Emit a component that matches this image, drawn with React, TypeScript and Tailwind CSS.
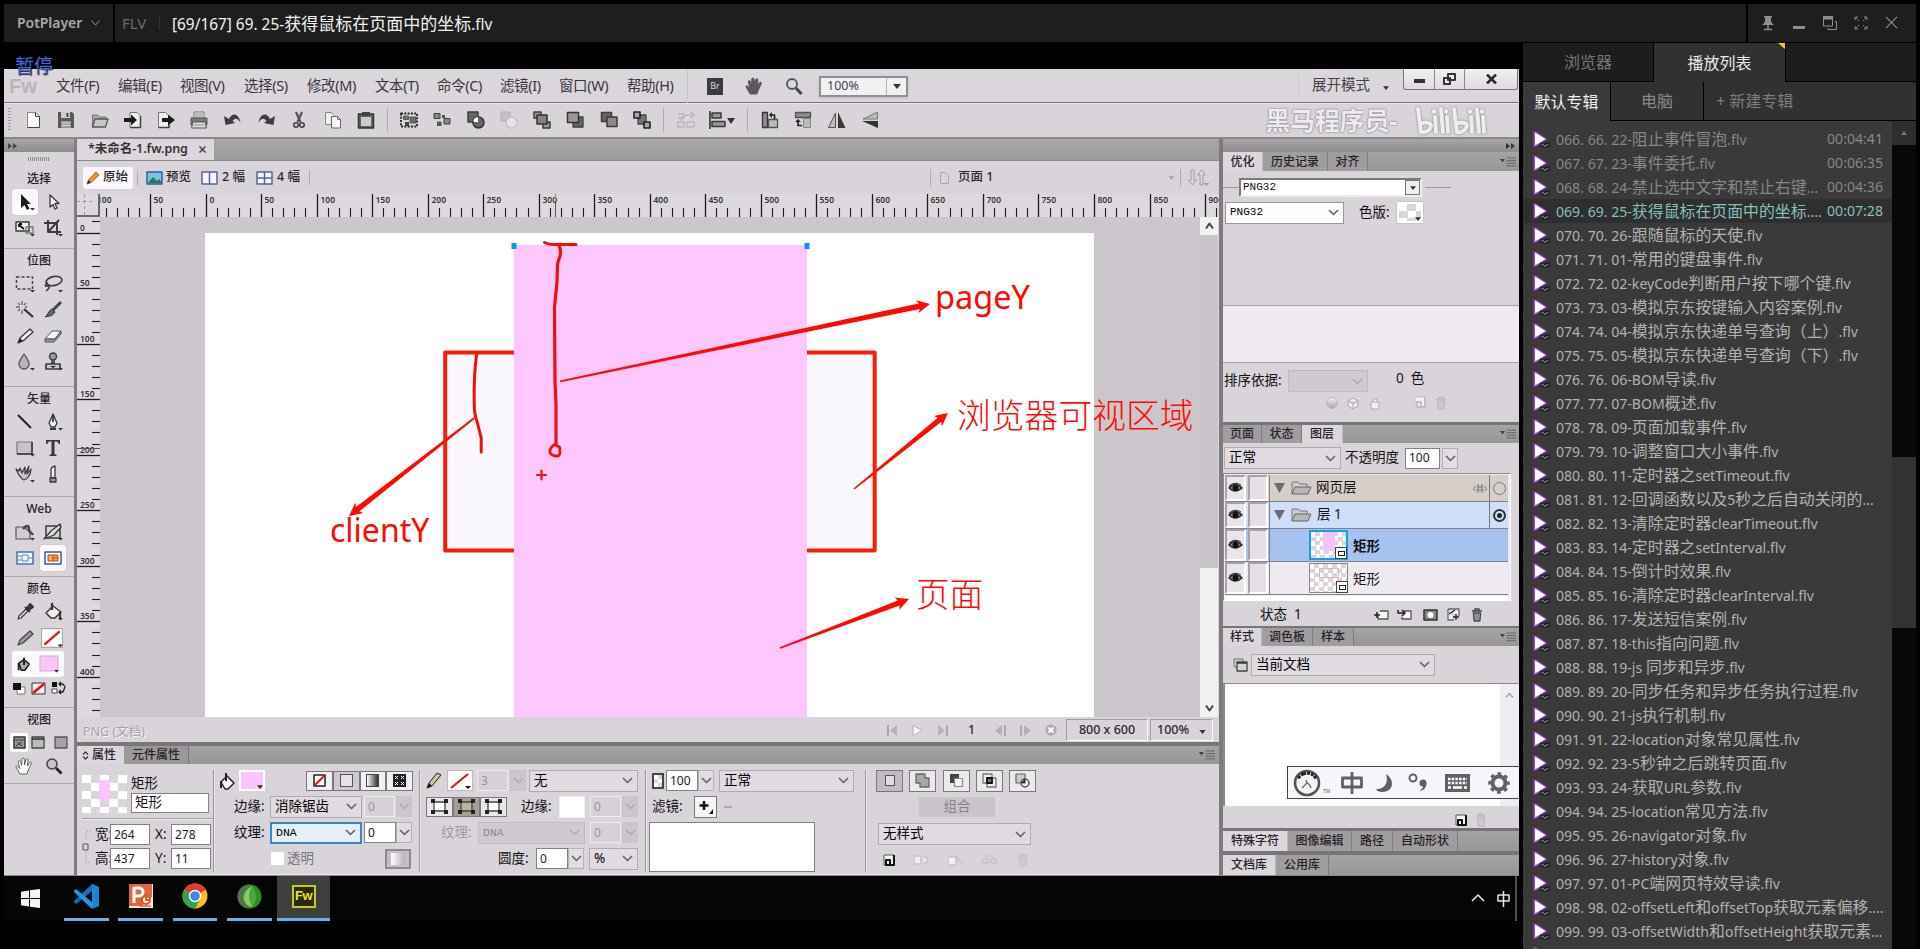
import React from 'react';

type Kids = { children?: React.ReactNode };

/* ---------- shared pieces ---------- */

function Ico({ children, c = 'w-[18px] h-[18px]', vb = '0 0 18 18' }: Kids & { c?: string; vb?: string }) {
  return (
    <svg viewBox={vb} className={`${c} block shrink-0`} fill="none" strokeLinejoin="round">
      {children}
    </svg>
  );
}

const Chev = ({ c = 'text-[#666]' }: { c?: string }) => (
  <Ico c={`w-[11px] h-[7px] ${c}`} vb="0 0 11 7">
    <path d="M1 1l4.5 4.5L10 1" stroke="currentColor" strokeWidth="1.7" />
  </Ico>
);

const Down = ({ c = 'w-[8px] h-[5px]' }: { c?: string }) => (
  <Ico c={c} vb="0 0 8 5">
    <path d="M0 0h8L4 5z" fill="#333" />
  </Ico>
);

function Combo({ text, c, dim }: { text: string; c: string; dim?: boolean }) {
  return (
    <div
      className={`flex shrink-0 items-center justify-between border pl-[4px] pr-[4px] ${c} ${
        dim ? 'border-[#c0bcc0] bg-[#cfcacf] text-[#8d8a8e]' : 'text-black'
      }`}
    >
      <span className="whitespace-nowrap">{text}</span>
      <Chev c={dim ? 'text-[#b0acb0]' : 'text-[#666]'} />
    </div>
  );
}

function Num({ v, c, dim, mono }: { v: string; c: string; dim?: boolean; mono?: boolean }) {
  return (
    <div
      className={`flex h-[21px] shrink-0 items-center border pl-[3px] text-[12px] ${c} ${
        dim ? 'border-[#f0edf1] bg-[#d6d1d6] text-[#98949a]' : 'border-[#858085] bg-white text-[#222]'
      } ${mono ? "[font-family:'Liberation_Mono',monospace]" : ''}`}
    >
      {v}
    </div>
  );
}

const Arr = ({ dim, c = '' }: { dim?: boolean; c?: string }) => (
  <div
    className={`flex h-[21px] w-[16px] shrink-0 items-center justify-center border ${c} ${
      dim ? 'border-[#cac5ca] bg-[#cbc6cb]' : 'border-[#b5b0b5] bg-[#e2dde3]'
    }`}
  >
    <Chev c={dim ? 'text-[#b0acb0]' : 'text-[#666]'} />
  </div>
);

const Trash = ({ f }: { f: string }) => (
  <Ico c="w-[12px] h-[14px]" vb="0 0 12 14">
    <path d="M1 3h10M4 3V1h4v2M2.500 5h7l-.7 8H3.200z" stroke={f} strokeWidth="1.500" />
    <path d="M5 6v6M7 6v6" stroke={f} />
  </Ico>
);

const NewDoc = ({ f, k }: { f: string; k: string }) => (
  <Ico c="w-[12px] h-[12px]" vb="0 0 12 12">
    <path d="M1 1h10v10H1z" stroke={f} fill="#f4f1f5" />
    <path d="M11 1v10H3V6h4v5" stroke={k} strokeWidth="2" />
  </Ico>
);

const MenuGlyph = () => (
  <Ico c="w-[16px] h-[10px]" vb="0 0 16 10">
    <path d="M0 2h5L2.500 5.500z" fill="#444" />
    <path d="M6.500 1H16M6.500 3.600H16M6.500 6.200H16M6.500 8.800H16" stroke="#666" />
  </Ico>
);

function PanelTabs({ tabs, active, h = 'h-[18px]', menu = true }: { tabs: [string, string][]; active: number; h?: string; menu?: boolean }) {
  return (
    <div className={`flex ${h} w-full shrink-0 items-stretch bg-linear-to-b from-[#a6a3a5] to-[#999698] text-[12px] font-medium text-[#262326]`}>
      {tabs.map(([t, w], i) => (
        <div
          key={t}
          className={`flex shrink-0 items-center justify-center whitespace-nowrap border-r ${w} ${
            i === active ? 'border-[#bbb] bg-[#dcd7dd]' : 'border-[#7f7c7e] bg-[#a09d9f]'
          }`}
        >
          {t}
        </div>
      ))}
      {menu && (
        <div className="ml-auto flex items-center pr-[3px]">
          <MenuGlyph />
        </div>
      )}
    </div>
  );
}

/* ---------- player chrome ---------- */

function TitleBar() {
  return (
    <header className="mx-[4px] mt-[4px] flex h-[38px] w-[1912px] shrink-0 items-center bg-[#1e1e1e]">
      <div className="flex h-full w-[111px] items-center border-r-2 border-black pl-[13px] pb-[2px]">
        <span className="text-[14px] font-semibold tracking-[-0.05px] text-[#a9a9a9]">PotPlayer</span>
        <Ico c="ml-[9px] mt-[2px] w-[9px] h-[6px]" vb="0 0 9 6">
          <path d="M.5.5l4 4.500 4-4.500" stroke="#999" />
        </Ico>
      </div>
      <span className="ml-[7px] w-[37px] text-[15px] text-[#6b6b6b]">FLV</span>
      <div className="h-[13px] w-px bg-[#333]" />
      <span className="ml-[12px] mt-[2px] whitespace-nowrap text-[#f2f2f2]">
        <span className="text-[15.4px]">[69/167] 69. 25-</span>
        <span className="text-[17px]">获得鼠标在页面中的坐标</span>
        <span className="text-[15.4px]">.flv</span>
      </span>
      <div className="ml-auto flex h-full w-[170px] items-center border-l-2 border-black pl-[13px] pb-[1px] text-[#8f8f8f]">
        <Ico c="w-[14px] h-[16px]" vb="0 0 14 16">
          <path d="M3 1h8v1.500h-1V7l3 3H1l3-3V2.500H3z" fill="currentColor" />
          <path d="M7 10v4M3 14.500h8" stroke="currentColor" strokeWidth="1.500" />
        </Ico>
        <div className="ml-[18px] mt-[9px] h-[3px] w-[12px] bg-[#8f8f8f]" />
        <Ico c="ml-[17px] w-[16px] h-[16px]" vb="0 0 16 16">
          <path d="M1.500 2h9v9h-9z M13 6.500h1.500v8H6V13" stroke="currentColor" />
          <path d="M1 1h10v3.500H1z" fill="currentColor" />
        </Ico>
        <Ico c="ml-[16px] w-[14px] h-[14px]" vb="0 0 14 14">
          <path d="M1 4V1h3M10 1h3v3M13 10v3h-3M4 13H1v-3M1 1l4 4M13 1L9 5M13 13L9 9M1 13l4-4" stroke="currentColor" strokeDasharray="3 .8" />
        </Ico>
        <Ico c="ml-[17px] w-[13px] h-[13px]" vb="0 0 14 14">
          <path d="M1 1l12 12M13 1L1 13" stroke="currentColor" strokeWidth="1.200" />
        </Ico>
      </div>
    </header>
  );
}

const files: [string, string?][] = [
  ['066. 66. 22-阻止事件冒泡.flv', '00:04:41'],
  ['067. 67. 23-事件委托.flv', '00:06:35'],
  ['068. 68. 24-禁止选中文字和禁止右键...', '00:04:36'],
  ['069. 69. 25-获得鼠标在页面中的坐标....', '00:07:28'],
  ['070. 70. 26-跟随鼠标的天使.flv'],
  ['071. 71. 01-常用的键盘事件.flv'],
  ['072. 72. 02-keyCode判断用户按下哪个键.flv'],
  ['073. 73. 03-模拟京东按键输入内容案例.flv'],
  ['074. 74. 04-模拟京东快递单号查询（上）.flv'],
  ['075. 75. 05-模拟京东快递单号查询（下）.flv'],
  ['076. 76. 06-BOM导读.flv'],
  ['077. 77. 07-BOM概述.flv'],
  ['078. 78. 09-页面加载事件.flv'],
  ['079. 79. 10-调整窗口大小事件.flv'],
  ['080. 80. 11-定时器之setTimeout.flv'],
  ['081. 81. 12-回调函数以及5秒之后自动关闭的...'],
  ['082. 82. 13-清除定时器clearTimeout.flv'],
  ['083. 83. 14-定时器之setInterval.flv'],
  ['084. 84. 15-倒计时效果.flv'],
  ['085. 85. 16-清除定时器clearInterval.flv'],
  ['086. 86. 17-发送短信案例.flv'],
  ['087. 87. 18-this指向问题.flv'],
  ['088. 88. 19-js 同步和异步.flv'],
  ['089. 89. 20-同步任务和异步任务执行过程.flv'],
  ['090. 90. 21-js执行机制.flv'],
  ['091. 91. 22-location对象常见属性.flv'],
  ['092. 92. 23-5秒钟之后跳转页面.flv'],
  ['093. 93. 24-获取URL参数.flv'],
  ['094. 94. 25-location常见方法.flv'],
  ['095. 95. 26-navigator对象.flv'],
  ['096. 96. 27-history对象.flv'],
  ['097. 97. 01-PC端网页特效导读.flv'],
  ['098. 98. 02-offsetLeft和offsetTop获取元素偏移....'],
  ['099. 99. 03-offsetWidth和offsetHeight获取元素...'],
  [''],
];

function Mixed({ text }: { text: string }) {
  return (
    <>
      {text.split(/([\u3000-\u9fff\uff00-\uffef]+)/).map((p, i) => (
        <span key={i} className={i % 2 ? 'text-[15.9px]' : 'text-[14.1px]'}>
          {p}
        </span>
      ))}
    </>
  );
}

function Sidebar() {
  return (
    <aside className="mt-px flex h-[906px] w-[393px] shrink-0 flex-col">
      <div className="flex h-[39px] shrink-0 text-[16px]">
        <div className="flex h-[38px] w-[131px] items-center justify-center border-r border-black bg-[#1d1d1d] text-[#777]">浏览器</div>
        <div className="relative flex h-[39px] w-[131px] items-center justify-center bg-[#313131] text-[#e8e8e8]">
          播放列表
          <svg className="absolute right-0 top-0 h-[6px] w-[7px]" viewBox="0 0 7 6">
            <path d="M0 0h7v6z" fill="#f5d400" />
          </svg>
        </div>
        <div className="ml-px h-[38px] flex-1 bg-[#1d1d1d]" />
      </div>
      <div className="flex h-[39px] shrink-0 text-[16px]">
        <div className="flex h-[39px] w-[87px] items-center justify-center bg-[#3a3a3a] text-[#f0f0f0]">默认专辑</div>
        <div className="flex h-[38px] w-[94px] items-center justify-center border-x border-black bg-[#313131] text-[#8a8a8a]">电脑</div>
        <div className="flex h-[38px] flex-1 items-center bg-[#313131] pl-[12px] text-[#7d7d7d]">+ 新建专辑</div>
      </div>
      <div className="flex h-[828px] shrink-0">
        <div className="flex w-[369px] flex-col overflow-hidden bg-[#3a3a3a] pt-[6px]">
          {files.map(([t, d], i) => (
            <div
              key={i}
              className={`flex h-[24px] shrink-0 items-center pl-[10px] pr-[9px] leading-none ${
                i < 3 ? 'text-[#878787]' : i === 3 ? 'bg-[#2f2f2f] text-[#84c0bd]' : 'text-[#b2b2b2]'
              }`}
            >
              <Ico c="w-[17px] h-[17px]" vb="0 0 17 17">
                <path d="M.5.5h2.500L14.500 8 3 15.500H.5z" fill="#a440cc" />
                <path d="M2 1.500L12.500 8 2 14.500z" fill="#fff" />
                <path d="M7 11.500h9.500v5H7z" fill="#222" />
                <path d="M8.500 14.500c1-2 2-1 2.500 0s2 0 4-1" stroke="#bbb" strokeWidth=".9" />
              </Ico>
              <span className="ml-[6px] whitespace-nowrap">
                <Mixed text={t} />
              </span>
              {d && <span className="ml-auto text-[14.100px]">{d}</span>}
            </div>
          ))}
        </div>
        <div className="flex w-[24px] flex-col bg-[#080808]">
          <div className="flex h-[24px] items-center justify-center bg-[#2e2e2e]">
            <Ico c="w-[6px] h-[4px]" vb="0 0 6 4">
              <path d="M3 0l3 4H0z" fill="#777" />
            </Ico>
          </div>
          <div className="mt-[312px] h-[171px] bg-[#333]" />
        </div>
      </div>
    </aside>
  );
}

/* ---------- editor: menu and toolbar ---------- */

const menus: [string, string][] = [
  ['文件(F)', 'w-[62px]'],
  ['编辑(E)', 'w-[62px]'],
  ['视图(V)', 'w-[64px]'],
  ['选择(S)', 'w-[63px]'],
  ['修改(M)', 'w-[68px]'],
  ['文本(T)', 'w-[62px]'],
  ['命令(C)', 'w-[63px]'],
  ['滤镜(I)', 'w-[59px]'],
  ['窗口(W)', 'w-[68px]'],
  ['帮助(H)', 'w-[60px]'],
];

const Hand = ({ f, s }: { f: string; s: string }) => (
  <path d="M5 17L2.500 12.500.8 9.500c.5-1 1.700-.8 2.400.2l1.600 1.800L3.200 4.500c.4-1.400 1.900-1.200 2.300 0l1.300 4L6.700 2c.4-1.300 2.200-1.200 2.500 0l.4 6 1.300-5.500c.6-1.200 2.200-.8 2.100.4l-.6 6.300 2.200-3.600c.9-1 2.100-.2 1.800.9l-3 6.500-1.400 4z" fill={f} stroke={s} strokeWidth=".9" />
);

function MenuBar() {
  return (
    <div className="flex h-[34px] shrink-0 items-start border-b border-[#777378] bg-[#dbd6dc]">
      <div className="flex h-full w-[52px] items-center pl-[5px] pt-[1px] text-[20px] font-bold text-[#b9b4ba] [font-family:'Liberation_Sans',sans-serif]">Fw</div>
      <div className="flex h-[34px] items-center text-[14.500px] text-[#39363b]">
        {menus.map(([t, w]) => (
          <span key={t} className={`${w} whitespace-nowrap tracking-[-0.4px]`}>
            {t}
          </span>
        ))}
      </div>
      <div className="flex h-[34px] items-center border-l border-[#cbc6cc]">
        <div className="ml-[19px] flex h-[17px] w-[16px] items-center justify-center bg-[#3d3a3d] text-[9px] text-[#d8d8d8]">Br</div>
        <Ico c="ml-[22px] w-[18px] h-[18px]">
          <Hand f="#5a575b" s="#5a575b" />
        </Ico>
        <Ico c="ml-[22px] w-[18px] h-[18px]">
          <circle cx="7" cy="7" r="5" stroke="#555" strokeWidth="1.800" />
          <path d="M11 11l5.500 6" stroke="#444" strokeWidth="3" />
        </Ico>
        <div className="ml-[16px] flex h-[21px] w-[89px] items-center border-2 border-[#928e93] bg-[#f3f0f4] pl-[6px] text-[12.500px] text-[#444] shadow-sm">
          <span className="w-[59px]">100%</span>
          <div className="flex h-full flex-1 items-center justify-center border-l border-[#b5b1b5]">
            <Down />
          </div>
        </div>
      </div>
      <div className="ml-auto flex h-[34px] items-start">
        <div className="mt-[5px] flex h-[22px] items-center border-l border-[#cbc6cc] pl-[13px] text-[14.500px] text-[#444]">展开模式</div>
        <div className="ml-[13px] mt-[17px]">
          <Down c="w-[6px] h-[4px]" />
        </div>
        <div className="ml-[14px] mr-[1px] flex h-[21px] w-[115px] rounded-b-[3px] border border-t-0 border-[#77737a] bg-linear-to-b from-[#f2eff3] to-[#dfdae0]">
          <div className="flex w-[31px] items-center justify-center border-r border-[#8b878d]">
            <div className="mt-[4px] h-[4px] w-[11px] bg-[#333]" />
          </div>
          <div className="flex w-[30px] items-center justify-center border-r border-[#8b878d]">
            <Ico c="w-[13px] h-[12px]" vb="0 0 13 12">
              <path d="M5 1h7v6H5z M1 5h6v6H1z" fill="#eee" stroke="#333" strokeWidth="2" />
            </Ico>
          </div>
          <div className="flex flex-1 items-center justify-center">
            <Ico c="w-[11px] h-[10px]" vb="0 0 11 10">
              <path d="M1 .5l9 9M10 .5l-9 9" stroke="#2e2b2f" strokeWidth="2.600" />
            </Ico>
          </div>
        </div>
      </div>
    </div>
  );
}

const d = '#3f3c40';
const g = '#8f8b90';
const pageShape = 'M3.500 1.500h8l4 4v11h-12z';

const fileIcons = [
  <><path d={pageShape} fill="#fbfafb" stroke="#888" /><path d="M11.500 1.500v4h4v11h-12" stroke="#444" /></>,
  <><path d="M1 1h14l2 2v14H1z" fill="#5b585c" /><path d="M4 1h9v6H4z" fill="#ccc" /><path d="M9.500 2h2v4h-2z" fill="#444" /><path d="M4 10h10v7H4z" fill="#999" /><path d="M5 12h8M5 14.500h8" stroke="#ddd" /></>,
  <><path d="M1.500 16V4h5l2 2H15v3" fill="#aaa" stroke="#777" /><path d="M4 8h13l-2.500 8H1.500z" fill="#c9c5ca" stroke="#555" strokeWidth="1.300" /></>,
  <><path d="M6 1.500h7l3.500 3.500v11.500H6z" fill="#eee" stroke="#777" /><path d="M16.500 5v11.500H6" stroke="#444" strokeWidth="1.500" /><path d="M0 7h7V3.500l6 5.500-6 5.500V11H0z" fill="#1d1b1e" /></>,
  <><path d="M1.500 1.500h7L12 5v11.500H1.500z" fill="#eee" stroke="#777" /><path d="M12 14v2.500H1.500" stroke="#444" strokeWidth="1.500" /><path d="M5 7h6V3.500l7 5.500-7 5.500V11H5z" fill="#1d1b1e" /></>,
  <><path d="M4 1h10v6H4z" fill="#eee" stroke="#777" /><path d="M1 7h16v7H1z" fill="#7b787c" stroke="#555" /><path d="M3 11h12l1.500 6h-15z" fill="#ddd" stroke="#555" /><path d="M5 3h8M5 5h8M4 14h10" stroke="#888" /></>,
  <><path d="M5 8C8 1 15 2 16.500 12c-2-4-5-6-8-2l2.500 2-9.500 2L0 5z" fill={d} /></>,
  <><path d="M13 8C10 1 3 2 1.500 12c2-4 5-6 8-2L7 12l9.500 2L18 5z" fill={d} /></>,
  <><path d="M6 1l4.500 10M12 1L7.500 11" stroke="#555" strokeWidth="2.200" /><circle cx="6" cy="14" r="2.200" stroke="#444" strokeWidth="1.600" /><circle cx="12" cy="14" r="2.200" stroke="#444" strokeWidth="1.600" /></>,
  <><path d="M1.500 1.500h6l3 3v9h-9z" fill="#f1eff2" stroke="#888" /><path d="M7.500 5.500h6l3 3v8.500h-9z" fill="#f8f7f9" stroke="#666" /><path d="M13.500 5.500v3h3" stroke="#777" /></>,
  <><path d="M1.500 3h15v14h-15z" fill="#666" stroke="#333" strokeWidth="1.500" /><path d="M4 6h10v9H4z" fill="#cdcacd" /><path d="M5 1h8v4H5z" fill="#444" /></>,
];

const arrangeIcons = [
  <><path d="M1 2.500h16v13H1z" stroke="#222" strokeDasharray="2 1.300" strokeWidth="1.800" /><path d="M3.500 5h5v3.500h-5zM10 6h6v6h-6z" fill="#6f6c70" stroke="#444" strokeWidth=".8" /><path d="M5 11h4v4H5z" fill="#444" /></>,
  <><path d="M1 2.500h6v5H1z" fill="#888" stroke={d} /><path d="M11 7.500h6v5.500h-6z" fill="#888" stroke={d} /><path d="M4 10.500h4.500V15H4zM9 4h3v3H9z" fill="#555" /></>,
  <><path d="M1 1h10v10H1z" fill="#666" stroke={d} strokeWidth="1.500" /><circle cx="11.500" cy="11.500" r="5.500" fill="#666" stroke="#333" strokeWidth="1.500" /><path d="M6.500 11V9.500Q7 6.500 11 6v5z" fill="#fff" /></>,
  <><path d="M1 1h9v9H1z" fill="#c4c0c5" stroke="#b5b1b5" /><circle cx="11.500" cy="11.500" r="5.500" fill="#e6e2e7" stroke="#b5b1b5" /></>,
  <><path d="M1 1h7v6H1zM10 11h7v6h-7z" fill="#999" stroke={d} strokeWidth="1.500" /><path d="M4 4h10v9H4z" fill="#858286" stroke="#333" strokeWidth="1.500" /></>,
  <><path d="M7 6h10v10H7z" fill="#666" stroke={d} strokeWidth="1.300" /><path d="M1.500 1.500h11v10h-11z" fill="#9a979b" stroke="#333" strokeWidth="1.500" /></>,
  <><path d="M1.500 1.500h10v9h-10z" fill="#666" stroke={d} strokeWidth="1.500" /><path d="M7 6h10v9.500H7z" fill="#8d8a8e" stroke="#3c393d" strokeWidth="1.500" /></>,
  <><path d="M5 4h8v9H5z" fill="#777" stroke="#444" strokeWidth="1.300" /><path d="M1 1h6v6H1zM11 11h6v6h-6z" fill="#aaa" stroke="#222" strokeWidth="1.600" /></>,
];

const flipIcons = [
  <><path d="M1.500 1.500h5v15h-5z" fill={g} stroke="#333" strokeWidth="1.300" /><path d="M7.500 8.500h9v8h-9z" fill="#bdb9be" stroke="#555" strokeWidth="1.300" /><path d="M9 4h4.500v4" stroke="#222" strokeWidth="1.700" /><path d="M8 4l3-3v6z" fill="#222" /></>,
  <><path d="M1.500 1.500h15v5h-15z" fill={g} stroke="#555" strokeWidth="1.300" /><path d="M9.500 7.500h7v9h-7z" fill="#bdb9be" stroke="#888" /><path d="M4 10v4.500h4" stroke="#222" strokeWidth="1.700" /><path d="M4 8l3 3H1z" fill="#222" /></>,
  <><path d="M7.500 2v14.500h-7z" fill="#bbb" stroke="#555" /><path d="M10 1v16h7.500z" fill="#3a373b" /></>,
  <><path d="M16.500 1v7H2z" fill="#bbb" stroke="#777" /><path d="M17 10v7L1 10z" fill="#333" /></>,
];

function IconRun({ items, first }: { items: React.ReactNode[]; first: string }) {
  return (
    <div className={`flex shrink-0 gap-[15.300px] ${first}`}>
      {items.map((n, i) => (
        <Ico key={i}>{n}</Ico>
      ))}
    </div>
  );
}

const Sep = ({ c = 'h-[24px]' }: { c?: string }) => <div className={`w-px shrink-0 bg-[#aeaaaf] ${c}`} />;

function ToolBar() {
  return (
    <div className="flex h-[36px] shrink-0 items-center border-b-2 border-[#8a878b] border-t border-t-[#eae6ec] bg-[#d9d4da] pb-px">
      <div className="ml-[4px] h-[24px] w-[3px] bg-[repeating-linear-gradient(#a19da2_0_1px,transparent_1px_3px)]" />
      <IconRun items={fileIcons} first="ml-[13px]" />
      <Sep c="ml-[12px] h-[24px]" />
      <IconRun items={arrangeIcons} first="ml-[12px]" />
      <Sep c="ml-[12px] h-[24px]" />
      <Ico c="ml-[13px] w-[18px] h-[18px]">
        <path d="M1 3h6v4H1M1 11h6v5H1zM10 11h7v5h-7zM4 10c0-5 4-6 8-6M12 4h5l-3-3M17 4l-3 3" stroke="#b9b5ba" strokeWidth="1.500" />
      </Ico>
      <Ico c="ml-[14px] w-[26px] h-[18px]" vb="0 0 26 18">
        <path d="M1 0v18" stroke="#333" strokeWidth="1.600" />
        <path d="M3 2h9v5H3zM3 10.500h13v5H3z" fill="#9a979b" stroke="#3c393d" strokeWidth="1.500" />
        <path d="M18 7h8l-4 6z" fill="#333" />
      </Ico>
      <Sep c="ml-[12px] h-[24px]" />
      <IconRun items={flipIcons} first="ml-[13px]" />
      <div className="ml-auto flex items-center pr-[31px] text-[#eeebef] [text-shadow:0_0_2px_#77737a,0_0_1px_#88848b]">
        <span className="whitespace-nowrap text-[25px] font-bold leading-none tracking-[-0.2px]">黑马程序员-</span>
        <Ico c="ml-[17px] w-[74px] h-[30px] drop-shadow-[0_0_1px_#777]" vb="0 0 74 30">
          <g stroke="#efecf0" strokeWidth="4" strokeLinecap="round">
            <path d="M4 4l3 23c5 1 9-2 10-6 0-3-4-4-9-3" />
            <path d="M21 12l1 15M27 4l2 23M33 12l1 15M20 6v1M32 6v1" />
            <path d="M40 4l3 23c5 1 9-2 10-6 0-3-4-4-9-3" />
            <path d="M57 12l1 15M63 4l2 23M69 12l1 15M56 6v1M68 6v1" />
          </g>
        </Ico>
      </div>
    </div>
  );
}

/* ---------- editor: tool column ---------- */

const k = '#3b383c';
const Cnr = <path d="M15 16h5l-2.500 2.500z" fill="#333" />;

function ToolCell({ children, on }: Kids & { on?: boolean }) {
  return (
    <div className={`flex h-[26px] w-[26px] items-center justify-center rounded-[3px] ${on ? 'bg-[#fbf9fc] shadow-[0_0_1px_#888]' : ''}`}>
      <Ico c="w-[20px] h-[20px]" vb="0 0 20 20">
        {children}
      </Ico>
    </div>
  );
}

function ToolGroup({ title, h, children }: Kids & { title: string; h: string }) {
  return (
    <div className={`flex shrink-0 flex-col items-center border-b border-[#a9a5aa] ${h}`}>
      <div className="mt-[3px] flex h-[18px] items-center text-[12px] font-medium text-[#222]">{title}</div>
      <div className="mt-[1px] grid w-[54px] grid-cols-2 gap-x-[2px]">{children}</div>
    </div>
  );
}

function ToolColumn() {
  return (
    <div className="flex w-[73px] shrink-0 flex-col border-r-[3px] border-[#807c81] bg-[#d9d4da]">
      <div className="flex h-[13px] shrink-0 items-center bg-linear-to-b from-[#a9a6a8] to-[#8f8c8e] pl-[4px]">
        <Ico c="w-[9px] h-[6px]" vb="0 0 9 6">
          <path d="M0 0l4 3-4 3zM5 0l4 3-4 3z" fill="#444" />
        </Ico>
      </div>
      <div className="mx-auto mt-[5px] h-[4px] w-[22px] shrink-0 bg-[repeating-linear-gradient(90deg,#908c91_0_1px,transparent_1px_2px)]" />
      <ToolGroup title="选择" h="h-[88px] pt-[6px]">
        <ToolCell on><path d="M6 2v14l3.500-3 2.500 5 2.500-1.500L12 12h4z" fill="#1c1a1d" />{Cnr}</ToolCell>
        <ToolCell><path d="M7 3v12l3-2.500 2 4.500 2-1-2-4.500h4z" fill="#fff" stroke={k} strokeWidth="1.300" /></ToolCell>
        <ToolCell><path d="M1 4h13v9H1z" fill="#eee" stroke={k} strokeWidth="1.400" /><path d="M11 9h7v6h-7z" stroke="#777" strokeWidth="1.300" /><path d="M4 7l5 4M4 6v3M4 6h3" stroke="#111" strokeWidth="1.800" />{Cnr}</ToolCell>
        <ToolCell><path d="M5 2v12h13M1 5h13v12M5 14L16 2" stroke={k} strokeWidth="1.900" />{Cnr}</ToolCell>
      </ToolGroup>
      <ToolGroup title="位图" h="h-[138px]">
        <ToolCell><path d="M1.500 3h16v12h-16z" stroke="#444" strokeDasharray="3 2" strokeWidth="1.500" />{Cnr}</ToolCell>
        <ToolCell><ellipse cx="11" cy="7" rx="8" ry="4.500" stroke={k} strokeWidth="1.600" transform="rotate(-12 11 7)" /><path d="M5 9c-4 2-3 4 0 3s1 3-2 5" stroke={k} strokeWidth="1.500" />{Cnr}</ToolCell>
        <ToolCell><path d="M7 1v4M7 10v4M1 7h4M10 7h2M3 3l2 2M11 3L9 5M3 11l2-2" stroke="#666" strokeWidth="1.300" /><path d="M9 9l9 8" stroke="#333" strokeWidth="2.300" /></ToolCell>
        <ToolCell><path d="M18 2L10 10" stroke="#444" strokeWidth="3" /><path d="M9 9l3 3c-2 4-6 4-10 5 3-2 3-6 7-8z" fill="#666" stroke="#333" /></ToolCell>
        <ToolCell><path d="M3 17l2-5 10-9 3 3-10 9z" fill="#eee" stroke={k} strokeWidth="1.300" /><path d="M3 17l2-5 3 3z" fill="#222" /></ToolCell>
        <ToolCell><path d="M2 13L9 5h9l-6 8z" fill="#f6f5f7" stroke="#555" /><path d="M2 13v3h9l7-8V5l-6 8z" fill="#999" stroke="#555" /></ToolCell>
        <ToolCell><path d="M9 2c3 5 5 7 5 10a5 5 0 01-10 0c0-3 2-5 5-10z" fill="#b9b5ba" stroke="#555" strokeWidth="1.300" />{Cnr}</ToolCell>
        <ToolCell><circle cx="10" cy="4.500" r="3.500" fill="#999" stroke={k} strokeWidth="1.400" /><path d="M8 8h4v4H8z" fill="#555" /><path d="M3 12h14v5H3z" fill="#ccc" stroke={k} strokeWidth="1.700" /><path d="M7 14h6l-3 2z" fill="#222" />{Cnr}</ToolCell>
      </ToolGroup>
      <ToolGroup title="矢量" h="h-[110px]">
        <ToolCell><path d="M3 3l13 13" stroke="#222" strokeWidth="1.900" /></ToolCell>
        <ToolCell><path d="M10 2l4 9-2 4H8l-2-4z" fill="#eee" stroke={k} strokeWidth="1.300" /><path d="M10 4v6M7 17h6" stroke={k} strokeWidth="1.800" />{Cnr}</ToolCell>
        <ToolCell><path d="M2 4h15v12H2z" fill="#c7c3c8" stroke="#777" strokeWidth="1.200" /><path d="M17 4v12H2" stroke="#333" strokeWidth="1.500" />{Cnr}</ToolCell>
        <ToolCell><path d="M3 2h14v4h-1.500c0-2-1-2.500-4-2.500V15c0 1.500.5 1.500 2 1.500V18h-7v-1.500c1.500 0 2 0 2-1.500V3.500c-3 0-4 .5-4 2.500H3z" fill={k} /></ToolCell>
        <ToolCell><path d="M1 5c2 5 4 9 8 11 4-1 7-6 7-11l-4 5 2-8-4 8V3L7 9 5 4l-1 3z" fill="#c7c3c8" stroke={k} strokeWidth="1.200" />{Cnr}</ToolCell>
        <ToolCell><path d="M8 14V6c0-3 4-4 4-4v12z" fill="#eee" stroke={k} strokeWidth="1.300" /><path d="M7 14h6v4H7z" fill="#999" stroke={k} strokeWidth="1.300" /></ToolCell>
      </ToolGroup>
      <ToolGroup title="Web" h="h-[80px]">
        <ToolCell><path d="M1 5h8l6 5v7H1z" fill="#cfcbd0" stroke="#555" strokeWidth="1.200" /><path d="M8 7c3-4 6-4 6 0s3 3 4 6" stroke="#444" strokeWidth="2.300" />{Cnr}</ToolCell>
        <ToolCell><path d="M3 4h14v12H3z" stroke={k} strokeWidth="1.500" /><path d="M1 17L8 9l9-7 1 3-7 8z" fill="#ddd" stroke={k} strokeWidth="1.300" />{Cnr}</ToolCell>
        <ToolCell><path d="M2 4h16v12H2z" fill="#f3f3f8" stroke="#4671b0" strokeWidth="1.500" /><path d="M7 7h6v6H7zM3 8h3M3 12h3M14 10h3" stroke="#5782bd" /></ToolCell>
        <ToolCell on><path d="M2 4h16v12H2z" fill="#fff" stroke="#2b5faa" strokeWidth="1.500" /><path d="M5 7h10v6H5z" fill="#f7b52c" stroke="#c43b1d" /><path d="M10 7v6M10 10h5" stroke="#c43b1d" /></ToolCell>
      </ToolGroup>
      <ToolGroup title="颜色" h="h-[131px]">
        <ToolCell><path d="M3 17l1-3 7-7 2 2-7 7z" fill="#ddd" stroke={k} strokeWidth="1.200" /><path d="M10 5l5 5M12 6l3-4 3 3-4 3z" fill="#444" stroke="#333" strokeWidth="2" /></ToolCell>
        <ToolCell><path d="M3 11L10 4l8 6-6 6H8z" fill="#eee" stroke={k} strokeWidth="1.500" /><path d="M9 1v7M17 10v6" stroke="#333" strokeWidth="2.200" />{Cnr}</ToolCell>
        <ToolCell><path d="M3 17l2-5 10-9 3 3-10 9z" fill="#999" stroke="#444" strokeWidth="1.200" /></ToolCell>
        <div className="flex h-[26px] w-[24px] items-center justify-center">
          <Ico c="w-[22px] h-[22px]" vb="0 0 20 20"><path d="M.5 1.500h19v17H.5z" fill="#fff" stroke="#aaa" /><path d="M3 16L17 4" stroke="#dc1818" strokeWidth="2" />{Cnr}</Ico>
        </div>
        <div className="col-span-2 flex h-[26px] w-[52px] items-center justify-between rounded-[3px] bg-[#fbf9fc] px-[4px]">
          <Ico c="w-[16px] h-[16px]" vb="0 0 18 18"><path d="M3 8l6-4 6 5-5 7H6z" fill="#aaa" stroke="#222" strokeWidth="1.700" /><path d="M3 8v8M9 2v8" stroke="#222" strokeWidth="2.200" /></Ico>
          <Ico c="w-[22px] h-[20px]" vb="0 0 20 20"><path d="M1 2h18v15H1z" fill="#fcc3fc" stroke="#bbb" />{Cnr}</Ico>
        </div>
        <div className="col-span-2 flex h-[22px] items-center justify-between">
          <Ico c="w-[14px] h-[13px]" vb="0 0 14 13"><path d="M5 5h8v7H5z" fill="#fff" stroke="#777" /><path d="M1 1h8v7H1z" fill="#111" /></Ico>
          <Ico c="w-[15px] h-[13px]" vb="0 0 15 13"><path d="M1 1h13v11H1z" fill="#eee" stroke="#333" /><path d="M2 11L13 2" stroke="#d11" strokeWidth="2.500" /></Ico>
          <Ico c="w-[15px] h-[14px]" vb="0 0 15 14"><path d="M1 1h5v5H1z" fill="#111" /><path d="M1 8h5v4H1z" fill="#fff" stroke="#444" /><path d="M8 3h4l2 3-2 5H8M10 1L8 3l2 2M10 9l-2 2 2 2" stroke="#222" strokeWidth="1.300" /></Ico>
        </div>
      </ToolGroup>
      <div className="flex h-[76px] shrink-0 flex-col items-center border-b border-[#a9a5aa]">
        <div className="mt-[3px] flex h-[18px] items-center text-[12px] font-medium text-[#222]">视图</div>
        <div className="mt-[2px] flex h-[22px] w-[58px] items-center justify-between">
          <div className="flex h-[19px] w-[18px] items-center justify-center rounded-[2px] bg-white">
            <Ico c="w-[13px] h-[13px]" vb="0 0 13 13"><path d="M1 1h11v11H1z" fill="#999" stroke="#333" strokeWidth="1.500" /><path d="M2 4h9M4 6l5 4M3 10l6-4" stroke="#333" /></Ico>
          </div>
          <Ico c="w-[14px] h-[13px] mr-[6px]" vb="0 0 14 13"><path d="M1 1h12v11H1z" fill="#bbb" stroke="#444" strokeWidth="1.300" /><path d="M1 3h12" stroke="#333" strokeWidth="1.500" /></Ico>
          <Ico c="w-[14px] h-[13px]" vb="0 0 14 13"><path d="M1 1h12v11H1z" fill="#a5a1a6" stroke="#555" strokeWidth="1.300" /></Ico>
        </div>
        <div className="flex h-[28px] w-[48px] items-center justify-between pb-[2px]">
          <Ico><Hand f="#fff" s="#555" /></Ico>
          <Ico><circle cx="7" cy="7" r="5" fill="#c8c4c9" stroke="#444" strokeWidth="1.500" /><path d="M11 11l5.500 5.500" stroke="#222" strokeWidth="2.800" /></Ico>
        </div>
      </div>
    </div>
  );
}

/* ---------- editor: document ---------- */

const STEP = 55.53;

function HRuler() {
  const ticks: React.ReactNode[] = [];
  for (let i = -9; i < 100; i++) {
    const x = Math.round(105.500 + (i * STEP) / 5) + 0.5;
    if (x > 1119) break;
    const major = i % 5 === 0;
    ticks.push(<path key={i} d={`M${x} ${major ? 0 : 14}V23`} stroke="#1d1b1e" strokeWidth={major ? 1.300 : 1.100} />);
    if (major)
      ticks.push(
        <text key={`t${i}`} x={x + 3} y="9" fontSize="8.500" fontWeight="600" fill="#333">
          {Math.abs(i * 10)}
        </text>,
      );
  }
  return (
    <svg className="block h-[23px] w-[1119px] shrink-0 bg-[#ddd8de]" viewBox="0 0 1119 23">
      {ticks}
      <path d="M455.500 0v23" stroke="#555" />
      <path d="M455.500 1v6" stroke="#e08a2c" />
      <text x="-3" y="9" fontSize="8.500" fontWeight="600" fill="#333">100</text>
    </svg>
  );
}

function VRuler() {
  const ticks: React.ReactNode[] = [];
  for (let i = -1; i < 45; i++) {
    const y = Math.round(15.500 + (i * STEP) / 5) + 0.5;
    const major = i % 5 === 0;
    ticks.push(<path key={i} d={`M${major ? 0 : 15} ${y}H23`} stroke="#1d1b1e" strokeWidth={major ? 1.300 : 1.100} />);
    if (major && y < 480)
      ticks.push(
        <text key={`t${i}`} x="3" y={y - 3} fontSize="8.500" fontWeight="600" fill="#333">
          {i * 10}
        </text>,
      );
  }
  return (
    <svg className="block h-[500px] w-[23px] shrink-0 bg-[#ddd8de]" viewBox="0 0 23 500">
      {ticks}
      <path d="M0 231.500h23" stroke="#555" />
    </svg>
  );
}

function Arrow({ a, b }: { a: [number, number]; b: [number, number] }) {
  const dx = b[0] - a[0];
  const dy = b[1] - a[1];
  const L = Math.hypot(dx, dy);
  const ang = (Math.atan2(dy, dx) * 180) / Math.PI;
  return (
    <path
      transform={`translate(${a[0]} ${a[1]}) rotate(${ang})`}
      d={`M0 -.8L${L - 11} -2.700L${L - 13} -6.500L${L} 0L${L - 13} 6.500L${L - 11} 2.700L0 .8z`}
      fill="#ff0a00"
    />
  );
}

function Canvas() {
  return (
    <div className="relative h-[500px] w-[1100px] shrink-0 overflow-hidden bg-[#cbc6cb]">
      <svg className="absolute left-0 top-0 h-[500px] w-[1100px]" viewBox="100 217 1100 500" fill="none">
        <path d="M205 233h889v484H205z" fill="#fff" />
        <path d="M445.200 352.500h429.500v198h-429.500z" fill="#fbf8fd" stroke="#fb1c06" strokeWidth="4" strokeLinejoin="round" />
        <path d="M514 245h293v472H514z" fill="#fec8fe" />
        <path d="M511.500 243h5v6h-5zM804.500 243h5v6h-5z" fill="#0d97f0" />
        <g stroke="#e8140c" strokeWidth="3" strokeLinecap="round" strokeLinejoin="round">
          <path d="M544.500 242.500q5 2.500 11 2H576" />
          <path d="M559 245q2.500 7 1 11t-2.500 8l-.5 18-2.500 25 .5 75 1 22v40" strokeWidth="3.200" />
          <path d="M556 444q-7 3-6 9 2 3 8 3 3-1 1.500-9l-4-2" strokeWidth="2.800" />
          <path d="M476.700 354q-3 20-2.500 50 0 10 3 18l4 16v14" />
          <path d="M541.500 470.500v9M537 475h9" strokeWidth="2.200" />
        </g>
        <Arrow a={[560, 381.400]} b={[930, 304]} />
        <Arrow a={[854, 489]} b={[948, 413]} />
        <Arrow a={[780, 648]} b={[909, 599]} />
        <Arrow a={[474.400, 418]} b={[349, 516]} />
      </svg>
      <span className="absolute left-[835px] top-[60px] whitespace-nowrap text-[32.500px] leading-[40px] text-[#ff0a00]">pageY</span>
      <span className="absolute left-[230px] top-[293px] whitespace-nowrap text-[32px] leading-[40px] text-[#ff0a00]">clientY</span>
      <span className="absolute left-[857px] top-[178px] whitespace-nowrap text-[33.800px] font-light leading-[40px] text-[#ff0a00]">浏览器可视区域</span>
      <span className="absolute left-[816px] top-[357px] whitespace-nowrap text-[33.600px] font-light leading-[40px] text-[#ff0a00]">页面</span>
    </div>
  );
}

function DocumentArea() {
  return (
    <div className="flex h-[603px] shrink-0 flex-col bg-[#d9d4da]">
      <div className="flex h-[22px] shrink-0 border-b border-[#8c898c] bg-linear-to-b from-[#a9a6a8] to-[#9d9a9c]">
        <div className="flex w-[137px] items-center bg-[#dcd7dd] pl-[11px] text-[12.500px] font-semibold tracking-[-0.050px] text-[#333]">
          <span className="w-[111px] whitespace-nowrap">*未命名-1.fw.png</span>
          <Ico c="w-[7px] h-[7px]" vb="0 0 7 7">
            <path d="M.5.5l6 6M6.500.5l-6 6" stroke="#444" strokeWidth="1.500" />
          </Ico>
        </div>
      </div>
      <div className="flex h-[33px] shrink-0 items-center bg-[#d9d4da] text-[12.500px] font-medium text-[#2b282c]">
        <div className="ml-[6px] flex h-[22px] w-[50px] items-center rounded-[3px] bg-[#faf8fb]">
          <Ico c="ml-[3px] w-[14px] h-[14px]" vb="0 0 14 14">
            <path d="M1 13l1.500-4L10 1l3 3-8 7.500z" fill="#ee9a2c" stroke="#8a4d12" strokeWidth=".8" />
            <path d="M1 13l1.500-4L5 11.500z" fill="#333" />
          </Ico>
          <span className="ml-[3px]">原始</span>
        </div>
        <Sep c="ml-[4px] h-[14px]" />
        <Ico c="ml-[8px] w-[17px] h-[14px]" vb="0 0 17 14">
          <path d="M1 1h15v12H1z" fill="#7cc0ec" stroke="#315c9b" strokeWidth="1.500" />
          <path d="M2 12l5-6 4 4 2-2 3 4z" fill="#2a7a3a" />
        </Ico>
        <span className="ml-[3px] w-[35px]">预览</span>
        <Ico c="w-[17px] h-[14px]" vb="0 0 17 14">
          <path d="M1 1h15v12H1zM8.500 1v12" fill="#f6f5fa" stroke="#54639a" strokeWidth="1.500" />
        </Ico>
        <span className="ml-[4px] w-[34px] whitespace-nowrap">2 幅</span>
        <Ico c="w-[17px] h-[14px]" vb="0 0 17 14">
          <path d="M1 1h15v12H1zM8.500 1v12M1 7h15" fill="#f6f5fa" stroke="#54639a" strokeWidth="1.500" />
        </Ico>
        <span className="ml-[4px] w-[32px] whitespace-nowrap">4 幅</span>
        <Sep c="h-[15px]" />
        <div className="ml-auto flex items-center">
          <Sep c="h-[18px]" />
          <Ico c="ml-[9px] w-[9px] h-[12px]" vb="0 0 9 12">
            <path d="M.5.5h5l3 3v8h-8z" stroke="#aaa" />
          </Ico>
          <span className="ml-[9px] w-[210px]">页面 1</span>
          <Ico c="w-[7px] h-[4px]" vb="0 0 8 5"><path d="M0 0h8L4 5z" fill="#aaa" /></Ico>
          <Sep c="ml-[5px] h-[18px]" />
          <Ico c="ml-[7px] mr-[10px] w-[21px] h-[18px]" vb="0 0 21 18">
            <path d="M3 1h3v10h2.500L4.500 16 .5 11H3zM12 16h3V6h2.500L13.500 1l-4 5H12z" stroke="#a19da2" />
            <path d="M16 14h5l-2.500 3z" fill="#999" />
          </Ico>
        </div>
      </div>
      <div className="flex h-[23px] shrink-0 overflow-hidden bg-[#ddd8de]">
        <svg className="block h-[23px] w-[23px] shrink-0" viewBox="0 0 23 23">
          <path d="M0 7.500h18M7.500 0v23" stroke="#999" strokeDasharray="3 3" />
          <path d="M22 0v22H0" stroke="#444" strokeWidth="1.500" fill="none" />
        </svg>
        <HRuler />
      </div>
      <div className="flex h-[500px] shrink-0">
        <VRuler />
        <Canvas />
        <div className="flex w-[18px] flex-col items-center justify-between bg-[#f3f0f4] py-[5px]">
          <Ico c="w-[9px] h-[8px]" vb="0 0 9 8"><path d="M1 6.500l3.500-5 3.500 5" stroke="#444" strokeWidth="2" /></Ico>
          <div className="mb-auto mt-[5px] h-[333px] w-full bg-[#c9c4ca]" />
          <Ico c="w-[9px] h-[8px]" vb="0 0 9 8"><path d="M1 1.500l3.500 5 3.500-5" stroke="#444" strokeWidth="2" /></Ico>
        </div>
      </div>
      <div className="flex h-[25px] shrink-0 items-center pt-px text-[12.500px] text-[#2b282c]">
        <span className="ml-[6px] mt-[4px] text-[12.500px] text-[#a7a3a8] [text-shadow:1px_1px_0_#f5f2f6]">PNG (文档)</span>
        <div className="ml-auto flex items-center">
          <Ico c="w-[11px] h-[11px]" vb="0 0 11 11"><path d="M1 0v11" stroke="#aba7ac" strokeWidth="2" /><path d="M10 0v11L3 5.500z" fill="#b5b1b6" /></Ico>
          <Ico c="ml-[14px] w-[11px] h-[11px]" vb="0 0 11 11"><path d="M1 .5v10l9-5z" fill="#f8f6f9" stroke="#b3afb4" /></Ico>
          <Ico c="ml-[14px] w-[11px] h-[11px]" vb="0 0 11 11"><path d="M10 0v11" stroke="#aba7ac" strokeWidth="2" /><path d="M1 0v11l7-5.500z" fill="#b5b1b6" /></Ico>
          <span className="ml-[20px] w-[27px] font-medium">1</span>
          <Ico c="w-[11px] h-[11px]" vb="0 0 11 11"><path d="M10 0v11" stroke="#aba7ac" strokeWidth="2" /><path d="M7 0v11L0 5.500z" fill="#b5b1b6" /></Ico>
          <Ico c="ml-[14px] w-[11px] h-[11px]" vb="0 0 11 11"><path d="M1 0v11" stroke="#aba7ac" strokeWidth="2" /><path d="M4 0v11l7-5.500z" fill="#b5b1b6" /></Ico>
          <Ico c="ml-[14px] w-[12px] h-[12px]" vb="0 0 12 12"><circle cx="6" cy="6" r="5.500" fill="#aeaab0" /><path d="M3.500 3.500l5 5M8.500 3.500l-5 5" stroke="#fff" strokeWidth="2" /></Ico>
          <div className="ml-[9px] flex h-[22px] w-[82px] items-center justify-center border border-[#a29ea3] border-b-white border-r-white font-medium">800 x 600</div>
          <div className="ml-[2px] mr-[6px] flex h-[22px] w-[63px] items-center justify-between border border-[#a29ea3] border-b-white border-r-white pl-[6px] pr-[6px] font-medium">
            100%
            <Down c="w-[7px] h-[4px] mt-[4px]" />
          </div>
        </div>
      </div>
    </div>
  );
}

/* ---------- editor: property inspector ---------- */

const Box = ({ children, c = '' }: Kids & { c?: string }) => (
  <div className={`flex items-center justify-center border border-[#7b777c] ${c}`}>{children}</div>
);

const checker = 'bg-[conic-gradient(#d9d5da_25%,#fff_0_50%,#d9d5da_0_75%,#fff_0)]';

function RectGlyph({ on }: { on?: boolean }) {
  return (
    <Ico c="w-[17px] h-[15px]" vb="0 0 17 15">
      <path d="M3 3h11v9H3z" fill={on ? '#b9b5a0' : '#fff'} stroke="#444" strokeWidth="1.300" />
      <path d="M0 0h4v4H0zM13 0h4v4h-4zM0 11h4v4H0zM13 11h4v4h-4z" fill="#222" />
    </Ico>
  );
}

const VRule = ({ c = '' }: { c?: string }) => <div className={`mt-[6px] h-[102px] w-[2px] shrink-0 border-l border-[#9b979c] bg-[#e9e6ea] ${c}`} />;

function Properties() {
  const fld = 'border-[#b0abb1] bg-[#e0dbe1] text-[13.5px]';
  return (
    <div className="flex h-[133px] shrink-0 flex-col border-t-[4px] border-[#7a777b] bg-[#d9d4da]">
      <div className="flex h-[18px] shrink-0 bg-linear-to-b from-[#a6a3a5] to-[#999698] text-[12px] font-medium text-[#262326]">
        <div className="flex w-[47px] items-center bg-[#dcd7dd] pl-[5px]">
          <Ico c="w-[7px] h-[9px] mr-[3px]" vb="0 0 7 9"><path d="M1 3.500L3.500 1 6 3.500M1 5.500L3.500 8 6 5.500" stroke="#333" strokeWidth="1.200" /></Ico>
          属性
        </div>
        <div className="flex w-[65px] items-center justify-center border-r border-[#777] bg-[#9b989a]">元件属性</div>
        <div className="ml-auto flex items-center pr-[4px]"><MenuGlyph /></div>
      </div>
      <div className="flex h-[111px] shrink-0 border-b border-[#f0edf1] text-[13.500px] leading-none text-[#111]">
        {/* object */}
        <div className="ml-[5px] flex w-[131px] shrink-0 flex-col">
          <div className="flex h-[54px] pt-[11px]">
            <div className={`flex h-[38px] w-[45px] justify-center bg-[length:18px_16px] pt-[5px] ${checker}`}>
              <div className="h-[21px] w-[11px] bg-[#fcc3fc]" />
            </div>
            <div className="ml-[4px] flex w-[78px] flex-col">
              <div className="flex h-[18px] items-center">矩形</div>
              <div className="flex h-[20px] items-center border border-[#858085] bg-white pl-[3px]">矩形</div>
            </div>
          </div>
          <div className="h-[2px] shrink-0 border-t border-[#a29ea3] bg-[#eee]" />
          <div className="mt-[4px] flex">
            <Ico c="mt-[6px] w-[10px] h-[34px]" vb="0 0 10 34">
              <path d="M9 1H4v10M4 22v10h5" stroke="#b0acb1" strokeDasharray="2 1" />
              <path d="M1 14h5v6H1z" stroke="#555" />
            </Ico>
            <div className="flex flex-col gap-[3px]">
              <div className="flex items-center">
                <span className="w-[18px] whitespace-nowrap pl-[3px]">宽:</span>
                <Num v="264" c="w-[40px]" />
                <span className="w-[21px] pl-[5px]">X:</span>
                <Num v="278" c="w-[40px]" />
              </div>
              <div className="flex items-center">
                <span className="w-[18px] whitespace-nowrap pl-[3px]">高:</span>
                <Num v="437" c="w-[40px]" />
                <span className="w-[21px] pl-[5px]">Y:</span>
                <Num v="11" c="w-[40px]" />
              </div>
            </div>
          </div>
        </div>
        <VRule />
        {/* fill */}
        <div className="flex w-[204px] shrink-0 flex-col gap-[5px] pl-[3px] pt-[6px]">
          <div className="flex h-[21px] items-center">
            <Ico><path d="M3 10L9 4l7 7-6 6H7z" fill="#fff" stroke="#223" strokeWidth="1.500" /><path d="M3 9v7M8 1v8" stroke="#223" strokeWidth="2" /></Ico>
            <div className="ml-[3px] flex h-[21px] w-[26px] items-end justify-end border-2 border-white bg-[#fcc3fc]"><Down c="w-[6px] h-[4px]" /></div>
            <div className="ml-[41px] flex h-[20px] w-[107px]">
              <Box c="w-[27px] bg-[#f2eff3]"><Ico c="w-[13px] h-[13px]" vb="0 0 13 13"><path d="M1 1h11v11H1z" fill="#fff" stroke="#222" strokeWidth="1.500" /><path d="M2 11l9-9" stroke="#d11" strokeWidth="2" /></Ico></Box>
              <Box c="w-[27px] bg-[#cfcad0]"><div className="h-[13px] w-[13px] border border-[#555] bg-[#e6e3e7]" /></Box>
              <Box c="w-[27px] bg-[#f2eff3]"><div className="h-[13px] w-[13px] border border-[#444] bg-linear-to-r from-white to-[#333]" /></Box>
              <Box c="w-[27px] bg-[#f2eff3]"><Ico c="w-[13px] h-[13px]" vb="0 0 13 13"><path d="M0 0h13v13H0z" fill="#222" /><path d="M2 2l3 3M5 2L2 5M8 2l3 3M11 2L8 5M2 8l3 3M5 8l-3 3M8 8l3 3M11 8l-3 3" stroke="#fff" /></Ico></Box>
            </div>
          </div>
          <div className="flex h-[21px] items-center">
            <span className="ml-[16px] w-[36px]">边缘:</span>
            <Combo text="消除锯齿" c={`h-[22px] w-[92px] ${fld}`} />
            <Num v="0" c="ml-[2px] w-[31px]" dim />
            <Arr c="ml-[1px]" dim />
          </div>
          <div className="flex h-[21px] items-center">
            <span className="ml-[16px] w-[36px]">纹理:</span>
            <Combo text="DNA" c="h-[22px] w-[92px] border-2 border-[#3a86cc] bg-[#e7effb] [font-family:'Liberation_Mono',monospace] text-[11.500px]" />
            <Num v="0" c="ml-[2px] w-[32px]" />
            <Arr />
          </div>
          <div className="flex h-[21px] items-center text-[#777]">
            <div className="ml-[53px] h-[13px] w-[13px] bg-white" />
            <span className="ml-[3px] w-[98px]">透明</span>
            <div className="flex h-[20px] w-[26px] items-center justify-center border-2 border-[#8d898e] bg-[#c3bfc4]"><div className="h-[12px] w-[14px] bg-linear-to-r from-white to-[#b5b1b6]" /></div>
          </div>
        </div>
        <VRule />
        {/* stroke */}
        <div className="flex w-[224px] shrink-0 flex-col gap-[5px] pl-[5px] pt-[6px]">
          <div className="flex h-[21px] items-center">
            <Ico c="w-[16px] h-[17px]" vb="0 0 16 17"><path d="M1 16l2-5 8-10 4 2-9 11z" fill="#c9c796" stroke="#222" /><path d="M1 16l2-5 3 3z" fill="#111" /></Ico>
            <div className="ml-[5px] flex h-[21px] w-[26px] items-center justify-center border border-[#bbb] bg-white">
              <Ico c="w-[22px] h-[18px]" vb="0 0 22 18"><path d="M2 16L19 2" stroke="#dc1818" strokeWidth="2.200" /><path d="M16 14h6l-3 3z" fill="#111" /></Ico>
            </div>
            <Num v="3" c="ml-[4px] w-[31px]" dim />
            <Arr c="ml-[2px]" dim />
            <Combo text="无" c={`ml-[3px] h-[22px] w-[109px] ${fld}`} />
          </div>
          <div className="flex h-[21px] items-center">
            <div className="flex h-[20px]">
              <Box c="w-[27px] bg-[#e9e6ea]"><RectGlyph /></Box>
              <Box c="w-[27px] bg-[#a29f98]"><RectGlyph on /></Box>
              <Box c="w-[27px] bg-[#e9e6ea]"><RectGlyph /></Box>
            </div>
            <span className="ml-[14px] w-[38px]">边缘:</span>
            <div className="h-[22px] w-[26px] border border-[#eee] bg-white" />
            <Num v="0" c="ml-[5px] w-[31px]" dim />
            <Arr c="ml-[1px]" dim />
          </div>
          <div className="flex h-[21px] items-center">
            <span className="ml-[15px] w-[37px] text-[#a09ca1]">纹理:</span>
            <Combo text="DNA" dim c="h-[22px] w-[107px] [font-family:'Liberation_Mono',monospace] text-[11.500px]" />
            <Num v="0" c="ml-[5px] w-[31px]" dim />
            <Arr c="ml-[1px]" dim />
          </div>
          <div className="flex h-[21px] items-center">
            <span className="ml-[72px] w-[38px]">圆度:</span>
            <Num v="0" c="w-[32px]" />
            <Arr />
            <Combo text="%" c={`ml-[5px] h-[22px] w-[49px] ${fld}`} />
          </div>
        </div>
        <VRule />
        {/* filters */}
        <div className="flex w-[218px] shrink-0 flex-col gap-[5px] pl-[2px] pt-[6px]">
          <div className="flex h-[21px] items-center">
            <div className={`ml-[3px] h-[16px] w-[12px] border-2 border-[#444] bg-[length:8px_8px] ${checker}`} />
            <Num v="100" c="ml-[2px] w-[32px]" />
            <Arr />
            <Combo text="正常" c={`ml-[5px] h-[22px] w-[135px] ${fld}`} />
          </div>
          <div className="flex h-[21px] items-center">
            <span className="ml-[3px] w-[42px]">滤镜:</span>
            <Box c="h-[22px] w-[23px] bg-[#f6f4f7]"><Ico c="w-[15px] h-[15px]" vb="0 0 15 15"><path d="M6 2v9M1.500 6.500h9" stroke="#111" strokeWidth="2.500" /><path d="M15 10v5h-4z" fill="#111" /></Ico></Box>
            <div className="ml-[7px] h-[2px] w-[8px] bg-[#aaa]" />
          </div>
          <div className="h-[50px] w-[166px] border border-[#858085] bg-white" />
        </div>
        <VRule />
        {/* compound shapes and styles */}
        <div className="flex flex-col gap-[5px] pl-[9px] pt-[6px]">
          <div className="flex h-[21px] items-center gap-[6.300px]">
            <Box c="h-[22px] w-[27px] bg-[#c0bcc1]"><div className="h-[11px] w-[10px] border border-[#555] bg-[#ddd]" /></Box>
            <Box c="h-[22px] w-[27px] bg-[#ece9ed]">
              <Ico c="w-[15px] h-[15px]" vb="0 0 15 15"><path d="M1 1h9v4h4v9H5v-4H1z" fill="#aaa6ab" stroke="#666" strokeWidth="1.300" /></Ico>
            </Box>
            <Box c="h-[22px] w-[27px] bg-[#ece9ed]">
              <Ico c="w-[15px] h-[15px]" vb="0 0 15 15"><path d="M1 1h9v4H5v5H1z" fill="#444" /><path d="M5.500 5.500h8v8h-8z" fill="#f4f2f5" stroke="#888" strokeWidth="1.200" /></Ico>
            </Box>
            <Box c="h-[22px] w-[27px] bg-[#ece9ed]">
              <Ico c="w-[15px] h-[15px]" vb="0 0 15 15"><path d="M1 1h9v9H1zM5 5h9v9H5z" stroke="#777" strokeWidth="1.300" /><path d="M5 5h5v5H5z" fill="#777" stroke="#111" strokeWidth="1.800" /></Ico>
            </Box>
            <Box c="h-[22px] w-[27px] bg-[#ece9ed]">
              <Ico c="w-[15px] h-[15px]" vb="0 0 15 15"><path d="M1 1h9v9H1z" fill="#ccc" stroke="#666" strokeWidth="1.200" /><circle cx="10" cy="10" r="4" stroke="#555" strokeWidth="1.500" /><path d="M6 10h4V6z" fill="#222" /></Ico>
            </Box>
          </div>
          <div className="ml-[43px] mt-[1px] flex h-[20px] w-[76px] items-center justify-center bg-[#c9c4c9] text-[#888489]">组合</div>
          <Combo text="无样式" c={`ml-[2px] mt-[1px] h-[22px] w-[153px] ${fld}`} />
          <div className="ml-[7px] mt-[2px] flex h-[16px] items-center gap-[19px]">
            <NewDoc f="#555" k="#111" />
            <Ico c="w-[15px] h-[12px]" vb="0 0 15 12"><path d="M0 2h7v8H0zM10 3h3v5l-4 2" fill="#f0eef1" stroke="#c6c2c7" strokeWidth="1.500" /></Ico>
            <Ico c="w-[14px] h-[12px]" vb="0 0 14 12"><path d="M0 3h8v8H0zM8 1l5 9" fill="#f0eef1" stroke="#c6c2c7" strokeWidth="1.500" /></Ico>
            <Ico c="w-[17px] h-[12px]" vb="0 0 17 12"><path d="M2 5h5v4H2zM10 5h5v4h-5zM8.500 0v3M4 1l1 2M13 1l-1 2" stroke="#c6c2c7" strokeWidth="1.500" /></Ico>
            <Trash f="#c6c2c7" />
          </div>
        </div>
      </div>
    </div>
  );
}

/* ---------- editor: right dock ---------- */

const Eye = () => (
  <Ico c="w-[15px] h-[12px]" vb="0 0 15 12">
    <path d="M1 6q6-7 13 0-7 6-13 0z" fill="#888" stroke="#222" strokeWidth="1.300" />
    <circle cx="7.500" cy="6" r="3" fill="#111" />
    <path d="M1 4q6-5 12-1" stroke="#333" />
  </Ico>
);

const Folder = () => (
  <Ico c="w-[21px] h-[14px]" vb="0 0 21 14">
    <path d="M1 13V2q0-1 1-1h5l2 2h7v3" fill="#ccc" stroke="#777" />
    <path d="M4 6h16l-3 7H1z" fill="#b9b5ba" stroke="#666" />
  </Ico>
);

function LayerRow({ c, children }: Kids & { c: string }) {
  return (
    <div className={`flex shrink-0 border-b border-[#858186] ${c}`}>
      <div className="flex w-[21px] items-center justify-center border-2 border-[#a6a2a7] border-b-white border-r-white bg-[#e9e5ea]"><Eye /></div>
      <div className="ml-[2px] w-[20px] border-2 border-[#a6a2a7] border-b-white border-r-white bg-[#e4e0e6]" />
      <div className="ml-px flex flex-1 items-stretch border-l border-[#858186]">{children}</div>
    </div>
  );
}

function Thumb({ sel }: { sel?: boolean }) {
  return (
    <div className={`relative flex h-[30px] w-[39px] justify-center bg-[length:9px_9px] ${checker} ${sel ? 'border-2 border-[#12a0f5]' : 'border border-[#888]'}`}>
      {sel ? <div className="h-[19px] w-[12px] bg-[#f6c2f6]" /> : <div className="mt-[4px] h-[10px] w-[20px] border border-[#efb0b0]" />}
      <div className="absolute bottom-[-1px] right-[-1px] flex h-[12px] w-[12px] items-center justify-center border border-[#444] bg-white">
        <div className="h-[5px] w-[7px] border border-[#222]" />
      </div>
    </div>
  );
}

function OptimizePanel() {
  return (
    <div className="flex h-[251px] shrink-0 flex-col bg-[#d9d4da] text-[13.500px] leading-none text-[#111]">
      <div className="mt-[7px] flex h-[19px] shrink-0 items-center [font-family:'Liberation_Mono',monospace]">
        <div className="h-px w-[16px] bg-[#9a969b]" />
        <div className="flex h-[19px] w-[183px] items-center justify-between border-2 border-[#7d797e] border-b-[#eee] border-r-[#eee] bg-white pl-[2px] text-[11px]">
          PNG32
          <div className="flex h-[15px] w-[15px] items-center justify-center border border-[#777] bg-[#f1eef2]"><Down c="w-[6px] h-[4px]" /></div>
        </div>
        <div className="ml-[3px] h-px w-[26px] bg-[#9a969b]" />
      </div>
      <div className="mt-[4px] flex h-[23px] shrink-0 items-center">
        <Combo text="PNG32" c="ml-[2px] h-[22px] w-[119px] border-[#99959a] bg-[#fdfcfd] [font-family:'Liberation_Mono',monospace] text-[11px]" />
        <span className="ml-[15px] w-[38px]">色版:</span>
        <div className="flex h-[21px] w-[26px] items-end justify-end border-2 border-white shadow-[0_0_1px_#777]">
          <div className={`flex h-full w-full items-end justify-end bg-[length:17px_14px] ${checker}`}><Down c="w-[6px] h-[4px]" /></div>
        </div>
      </div>
      <div className="mt-[81px] h-[58px] shrink-0 border-y border-[#a6a2a7] bg-[#efeaf1]" />
      <div className="mt-[7px] flex h-[22px] shrink-0 items-center">
        <span className="w-[65px] pl-px">排序依据:</span>
        <Combo text="" dim c="h-[22px] w-[80px]" />
        <span className="ml-[28px] mt-[-4px] whitespace-nowrap">0&nbsp; 色</span>
      </div>
      <div className="mt-[4px] flex h-[14px] shrink-0 items-center pl-[103px]">
        <div className="h-[12px] w-[12px] rounded-full border border-[#bbb] bg-linear-to-b from-[#eee] to-[#aaa]" />
        <Ico c="ml-[9px] w-[12px] h-[13px]" vb="0 0 12 13"><path d="M6 1l5 3v5l-5 3-5-3V4zM1 4l5 3 5-3M6 7v5" stroke="#aaa6ab" fill="#eee" /></Ico>
        <Ico c="ml-[11px] w-[10px] h-[13px]" vb="0 0 10 13"><path d="M1 5h8v7H1zM3 5V2h4v3" stroke="#b0acb1" fill="#eee" /></Ico>
        <div className="ml-[34px] flex gap-[9px]"><NewDoc f="#c5c1c6" k="#bfbbc0" /><Trash f="#bfbbc0" /></div>
      </div>
    </div>
  );
}

function LayersPanel() {
  return (
    <div className="flex h-[183px] shrink-0 flex-col bg-[#d9d4da] text-[13.500px] leading-none text-[#111]">
      <div className="mt-[4px] flex h-[22px] shrink-0 items-center">
        <Combo text="正常" c="ml-px h-[22px] w-[117px] border-[#b0abb1] bg-[#e0dbe1]" />
        <span className="ml-[4px] w-[60px] whitespace-nowrap">不透明度</span>
        <Num v="100" c="w-[35px]" />
        <Arr c="ml-[2px]" />
      </div>
      <div className="mt-[4px] flex h-[128px] w-[288px] shrink-0 flex-col border border-[#8d898e] border-b-white border-r-white bg-[#efeaf1] pl-px pr-[2px] pt-px">
        <LayerRow c="h-[27px] bg-[#d6cec9]">
          <div className="flex w-[220px] items-center border-r border-[#777] pl-[4px]">
            <Ico c="w-[11px] h-[10px]" vb="0 0 11 10"><path d="M0 0h11L5.500 10z" fill="#6e6b6f" /></Ico>
            <div className="ml-[6px]"><Folder /></div>
            <span className="ml-[4px]">网页层</span>
            <Ico c="ml-auto mr-[2px] w-[14px] h-[11px]" vb="0 0 14 11"><path d="M5 1v9M9 1v9M4 4h6M4 7h6M3 3L0 5.500 3 8M11 3l3 2.500L11 8" stroke="#777" /></Ico>
          </div>
          <div className="flex flex-1 items-center justify-center"><div className="h-[13px] w-[13px] rounded-full border border-[#777]" /></div>
        </LayerRow>
        <LayerRow c="h-[27px] bg-[#cfdff9]">
          <div className="flex w-[220px] items-center border-r border-[#777] pl-[4px]">
            <Ico c="w-[11px] h-[10px]" vb="0 0 11 10"><path d="M0 0h11L5.500 10z" fill="#6e6b6f" /></Ico>
            <div className="ml-[6px]"><Folder /></div>
            <span className="ml-[5px]">层 1</span>
          </div>
          <div className="flex flex-1 items-center justify-center"><div className="flex h-[13px] w-[13px] items-center justify-center rounded-full border-2 border-[#333]"><div className="h-[5px] w-[5px] rounded-full bg-[#222]" /></div></div>
        </LayerRow>
        <LayerRow c="h-[33px] bg-[#a6c3ef]">
          <div className="flex items-center pl-[39px] font-bold"><Thumb sel /><span className="ml-[5px] mt-[3px]">矩形</span></div>
        </LayerRow>
        <LayerRow c="h-[33px] bg-[#efeaf1]">
          <div className="flex items-center pl-[39px]"><Thumb /><span className="ml-[5px] mt-[3px]">矩形</span></div>
        </LayerRow>
        <div className="mt-px h-[4px] shrink-0 bg-white" />
      </div>
      <div className="flex h-[24px] shrink-0 items-center pt-[3px]">
        <span className="ml-[37px] w-[114px]">状态&nbsp; 1</span>
        <Ico c="w-[15px] h-[12px]" vb="0 0 15 12"><path d="M6 2h8v8H4V7" fill="#f4f2f5" stroke="#555" strokeWidth="1.300" /><path d="M0 6h6M3 3v6" stroke="#222" strokeWidth="1.500" /></Ico>
        <Ico c="ml-[8px] w-[15px] h-[12px]" vb="0 0 15 12"><path d="M7 2h7v8H5V8" fill="#f4f2f5" stroke="#555" strokeWidth="1.300" /><path d="M1 1v3h6M5 1l3 3-3 3" stroke="#222" strokeWidth="1.500" /></Ico>
        <Ico c="ml-[11px] w-[15px] h-[12px]" vb="0 0 15 12"><path d="M1 1h13v10H1z" fill="#888" stroke="#333" strokeWidth="1.500" /><circle cx="7.500" cy="6" r="3" fill="#fff" /></Ico>
        <Ico c="ml-[9px] w-[13px] h-[13px]" vb="0 0 13 13"><path d="M1 1h11v7M7 12H1V1" fill="#eee" stroke="#666" strokeWidth="1.300" /><path d="M6 9h6M9 6v6M2 6l6-4" stroke="#222" strokeWidth="1.300" /></Ico>
        <div className="ml-[11px]"><Trash f="#444" /></div>
      </div>
    </div>
  );
}

const InputBar = () => (
  <div className="absolute left-[62px] top-[82px] flex h-[33px] w-[232px] items-center border border-r-0 border-[#444] bg-[#f7f5f9] text-[#626065]">
    <Ico c="ml-[5px] w-[30px] h-[28px]" vb="0 0 30 28">
      <circle cx="14" cy="14" r="12" stroke="#555" strokeWidth="2.600" />
      <path d="M5 9l6-5M10 5q9-3 13 5" stroke="#222" strokeWidth="3" strokeDasharray="3 1" />
      <path d="M13 11l1 3-5 5M14 14q3 1 4 5" stroke="#666" strokeWidth="1.300" />
    </Ico>
    <span className="mt-[18px] w-[18px] text-[5px]">TM</span>
    <Ico c="w-[22px] h-[22px]" vb="0 0 22 22"><path d="M1.500 6h19v9h-19zM11 0v22" stroke="currentColor" strokeWidth="2.800" /></Ico>
    <Ico c="ml-[12px] w-[18px] h-[20px]" vb="0 0 18 20"><path d="M11 1c9 5 8 18-4 18-3 0-5-1-6-3 8 1 13-6 10-15z" fill="currentColor" /></Ico>
    <Ico c="ml-[15px] w-[19px] h-[19px]" vb="0 0 19 19"><circle cx="5" cy="5" r="3.500" stroke="currentColor" strokeWidth="2" /><circle cx="15" cy="10" r="3.500" fill="currentColor" /><path d="M18.500 10q0 7-7 8 4-3 4-6z" fill="currentColor" /></Ico>
    <Ico c="ml-[18px] w-[25px] h-[18px]" vb="0 0 25 18"><path d="M0 0h25v18H0z" fill="currentColor" /><path d="M3 5h19M3 9h19" stroke="#fff" strokeWidth="2.500" strokeDasharray="2.500 1.200" /><path d="M3 13.500h3M8 13.500h9M19 13.500h3" stroke="#fff" strokeWidth="2.500" /></Ico>
    <Ico c="ml-[18px] w-[22px] h-[22px]" vb="0 0 22 22"><circle cx="11" cy="11" r="6.500" stroke="currentColor" strokeWidth="4" /><circle cx="11" cy="11" r="9" stroke="currentColor" strokeWidth="3.500" strokeDasharray="3.600 3.470" strokeDashoffset="1.800" /></Ico>
  </div>
);

function Dock() {
  return (
    <div className="flex w-[300px] shrink-0 flex-col border-l-[4px] border-[#7e7b7f] bg-[#77747a]">
      <div className="flex h-[13px] shrink-0 items-center justify-end bg-linear-to-b from-[#a9a6a8] to-[#8f8c8e] pr-[4px]">
        <Ico c="w-[9px] h-[6px]" vb="0 0 9 6"><path d="M0 0l4 3-4 3zM5 0l4 3-4 3z" fill="#333" /></Ico>
      </div>
      <PanelTabs tabs={[['优化', 'w-[40px]'], ['历史记录', 'w-[65px]'], ['对齐', 'w-[40px]']]} active={0} h="h-[19px]" />
      <OptimizePanel />
      <div className="h-[3px] shrink-0" />
      <PanelTabs tabs={[['页面', 'w-[39px]'], ['状态', 'w-[40px]'], ['图层', 'w-[41px]']]} active={2} />
      <LayersPanel />
      <div className="h-[2px] shrink-0" />
      <PanelTabs tabs={[['样式', 'w-[39px]'], ['调色板', 'w-[51px]'], ['样本', 'w-[41px]']]} active={0} />
      <div className="flex h-[37px] shrink-0 items-center bg-[#d9d4da] text-[13.500px] leading-none">
        <Ico c="ml-[10px] w-[15px] h-[14px]" vb="0 0 15 14"><path d="M1 1h9v8H1z" fill="#ccc" stroke="#777" /><path d="M4 4h10v9H4z" fill="#d6d2d7" stroke="#444" strokeWidth="1.300" /><path d="M4 5h10" stroke="#333" strokeWidth="1.500" /></Ico>
        <Combo text="当前文档" c="ml-[3px] h-[22px] w-[184px] border-[#b0abb1] bg-[#e0dbe1]" />
      </div>
      <div className="relative flex h-[123px] shrink-0 justify-end border-l-2 border-t border-[#8d898e] bg-white">
        <div className="flex w-[19px] justify-center bg-[#f0edf2] pt-[8px]"><Ico c="w-[9px] h-[7px]" vb="0 0 9 7"><path d="M1 5.500l3.500-4 3.500 4" stroke="#aaa" strokeWidth="1.800" /></Ico></div>
        <InputBar />
      </div>
      <div className="flex h-[22px] shrink-0 items-center bg-[#d9d4da] pl-[232px] pt-[5px]">
        <NewDoc f="#555" k="#111" />
        <div className="ml-[8px]"><Trash f="#bfbbc0" /></div>
      </div>
      <div className="h-[3px] shrink-0" />
      <PanelTabs tabs={[['特殊字符', 'w-[65px]'], ['图像编辑', 'w-[64px]'], ['路径', 'w-[41px]'], ['自动形状', 'w-[65px]']]} active={0} h="h-[20px]" menu={false} />
      <div className="h-[4px] shrink-0" />
      <PanelTabs tabs={[['文档库', 'w-[53px]'], ['公用库', 'w-[53px]']]} active={0} h="h-[20px]" menu={false} />
    </div>
  );
}

/* ---------- taskbar ---------- */

const Task = ({ children, c = '' }: Kids & { c?: string }) => (
  <div className={`flex h-[45px] shrink-0 items-center justify-center border-b-[3px] border-[#66b1ee] pb-[2px] ${c}`}>{children}</div>
);

function Taskbar() {
  return (
    <div className="flex h-[45px] shrink-0 items-center bg-[#030603]">
      <Ico c="ml-[17px] w-[19px] h-[19px]" vb="0 0 19 19"><path d="M0 2.700L8 1.500V9H0zM9 1.300L19 0v9H9zM0 10h8v7.500l-8-1.200zM9 10h10v9L9 17.700z" fill="#f4f4f4" /></Ico>
      <Task c="ml-[24px] w-[45px]"><Ico c="w-[27px] h-[27px]" vb="0 0 27 27"><path d="M19 1l7 3v19l-7 3z" fill="#1b86d6" /><path d="M19 1v7L8 17l-5 4-2-1.500V18L19 1z" fill="#0d6fc0" /><path d="M1 9V7.500L3 6l16 13v7z" fill="#2a93e0" /></Ico></Task>
      <Task c="ml-[9px] w-[45px]">
        <Ico c="w-[26px] h-[26px]" vb="0 0 26 26">
          <path d="M1 1h24v24H1z" fill="#f8e7df" />
          <path d="M1 1h23v13L14 23H1z" fill="#e0693b" />
          <path d="M6 20V5h5a4 4 0 010 8H6" stroke="#fff" strokeWidth="3" />
          <circle cx="18" cy="17" r="4" fill="#fff" stroke="#d9571f" strokeWidth="2" />
          <path d="M18 13v4h4" stroke="#d9571f" strokeWidth="1.800" />
          <path d="M12 23h11" stroke="#e0693b" strokeWidth="1.500" />
        </Ico>
      </Task>
      <Task c="ml-[10px] w-[44px]">
        <Ico c="w-[26px] h-[26px]" vb="0 0 26 26">
          <circle cx="13" cy="13" r="12.500" fill="#fbc116" />
          <path d="M13 13L2.200 6.800A12.500 12.500 0 0123.800 6.800z" fill="#e23b2e" />
          <path d="M13 .5A12.500 12.500 0 0123.800 6.800H13z" fill="#e23b2e" />
          <path d="M2.200 6.800A12.500 12.500 0 0013 25.500l5.400-9.400L13 13z" fill="#2fa24c" />
          <circle cx="13" cy="13" r="6.200" fill="#fff" />
          <circle cx="13" cy="13" r="4.800" fill="#4284f3" />
        </Ico>
      </Task>
      <Task c="ml-[10px] w-[45px]">
        <Ico c="w-[25px] h-[25px]" vb="0 0 25 25">
          <circle cx="12.500" cy="12.500" r="12" fill="#2f8f2b" />
          <path d="M12.500 .5A12 12 0 0012.500 24.500Q4 20 5 12T12.500 .5z" fill="#5c6a58" />
          <path d="M15 2Q5 8 7 16q2 6 8 7 7-9 0-21z" fill="#8fc765" />
          <path d="M15 2q-6 9 0 21 7-9 0-21z" fill="#4da53b" />
        </Ico>
      </Task>
      <Task c="ml-[5px] w-[53px] bg-[#3e403e]">
        <div className="flex h-[23px] w-[24px] items-center justify-center border-2 border-[#c9cb1a] bg-[#29290a] text-[13px] font-bold tracking-[-0.5px] text-[#e6e81f] [font-family:'Liberation_Sans',sans-serif]">Fw</div>
      </Task>
      <div className="ml-auto flex h-full items-center">
        <Ico c="w-[14px] h-[8px] mt-[-1px]" vb="0 0 14 8"><path d="M1 7l6-6 6 6" stroke="#e4e4e4" strokeWidth="1.600" /></Ico>
        <Ico c="ml-[12px] w-[13px] h-[16px]" vb="0 0 13 16"><path d="M1 4h11v6H1zM6.500 0v16" stroke="#e4e4e4" strokeWidth="1.500" /></Ico>
        <div className="ml-[5px] mr-[2px] h-full w-[2px] bg-[#4d4f4d]" />
      </div>
    </div>
  );
}

export default function App() {
  return (
    <div className="flex h-[949px] w-[1920px] flex-col overflow-hidden bg-black [font-family:'Noto_Sans','Noto_Sans_CJK_SC',sans-serif]">
      <TitleBar />
      <div className="flex h-[907px] shrink-0">
        <main className="relative ml-[4px] mr-[4px] flex w-[1515px] shrink-0 flex-col pt-[27px]">
          <MenuBar />
          <ToolBar />
          <div className="flex h-[737px] shrink-0 overflow-hidden border-b border-[#888]">
            <ToolColumn />
            <div className="flex w-[1142px] shrink-0 flex-col overflow-hidden">
              <DocumentArea />
              <Properties />
            </div>
            <Dock />
          </div>
          <Taskbar />
          <span className="absolute left-[11px] top-[13px] text-[19px] leading-[22px] text-[#4468dc] [text-shadow:1px_1px_1px_#111]">暂停</span>
        </main>
        <Sidebar />
      </div>
    </div>
  );
}
